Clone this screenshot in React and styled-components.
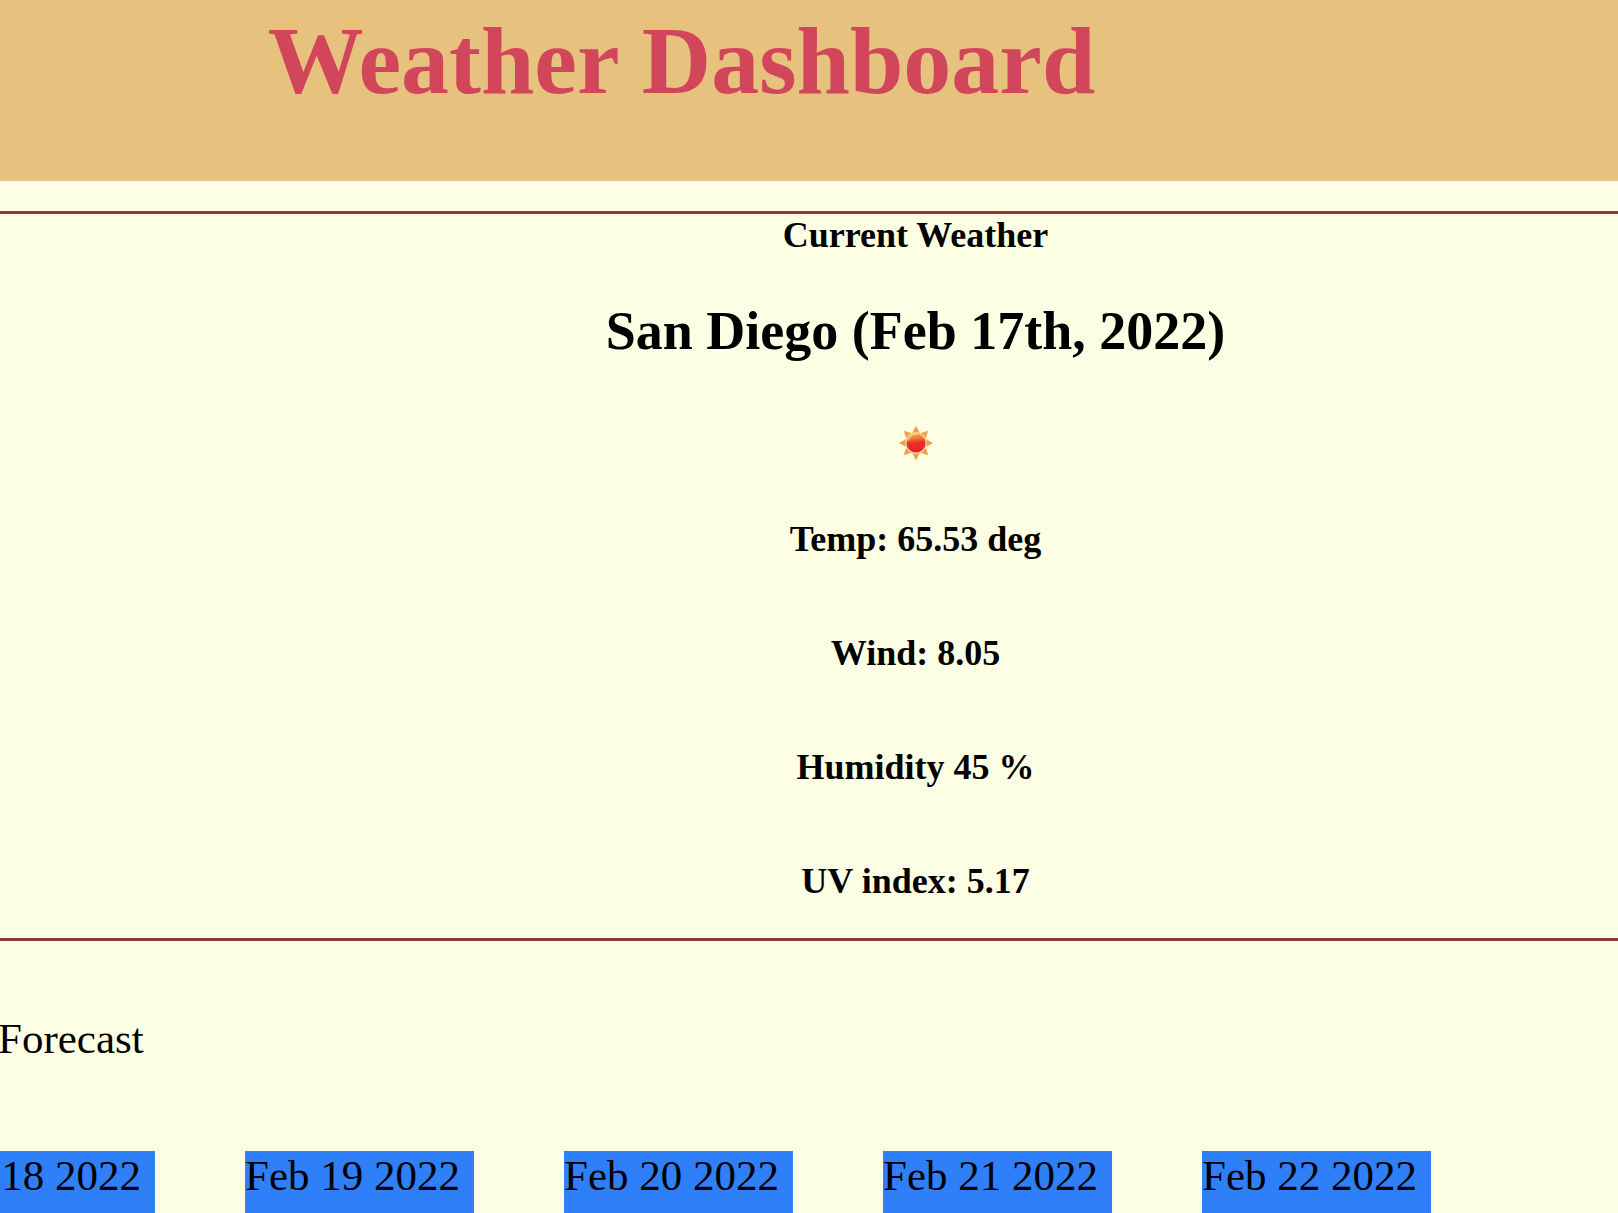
import React from "react";
import styled, { createGlobalStyle } from "styled-components";

const GlobalStyle = createGlobalStyle`
  *, *::before, *::after { box-sizing: border-box; }
  body {
    margin: 0;
    overflow-x: hidden;
    background: #fcffe4;
    color: #000;
    font-family: "Liberation Serif", "Times New Roman", Times, serif;
  }
`;

const Page = styled.div`
  display: flex;
  flex-direction: column;
  min-height: 100vh;
  overflow-x: hidden;
`;

const Header = styled.header`
  padding: 6px 255px 65px 0;
  background: #e7c27e;
  text-align: center;
`;

const Title = styled.h1`
  margin: 0;
  color: #d1465b;
  font-size: 96px;
  line-height: 110px;
`;

const Current = styled.section`
  display: flex;
  flex-direction: column;
  align-items: center;
  margin-top: 30px;
  padding: 0 0 36px 213px;
  border-top: 3px solid #933634;
  border-bottom: 3px solid #933634;
  font-weight: bold;
`;

const Label = styled.h3`
  margin: 0 0 44px;
  font-size: 36px;
  line-height: 42px;
`;

const City = styled.h2`
  margin: 0;
  font-size: 54px;
  line-height: 62px;
`;

const SunIcon = styled.svg`
  display: block;
  width: 36px;
  height: 36px;
  margin: 63px 0 57px;
`;

const Stats = styled.div`
  display: flex;
  flex-direction: column;
  gap: 72px;
  text-align: center;
`;

const Stat = styled.p`
  margin: 0;
  font-size: 36px;
  line-height: 42px;
`;

const Forecast = styled.section`
  display: flex;
  flex: 1;
  flex-direction: column;
  padding-top: 73px;
  font-size: 43px;
  line-height: 50px;
`;

const ForecastTitle = styled.p`
  margin: 0 0 87px -2px;
`;

const Days = styled.div`
  display: flex;
  flex: 1;
  gap: 90px;
  margin-left: -74px;
`;

const Day = styled.article`
  flex: 0 0 229px;
  background: #2f7ff8;
`;

const stats = ["Temp: 65.53 deg", "Wind: 8.05", "Humidity 45 %", "UV index: 5.17"];
const days = ["Feb 18 2022", "Feb 19 2022", "Feb 20 2022", "Feb 21 2022", "Feb 22 2022"];
const rays = [0, 45, 90, 135, 180, 225, 270, 315];

function Sun() {
  return (
    <SunIcon viewBox="0 0 36 36" role="img" aria-label="Sunny">
      <defs>
        <linearGradient id="disc" x1="0.4" y1="0" x2="0.5" y2="1">
          <stop offset="0" stopColor="#f3a53c" />
          <stop offset="0.25" stopColor="#ee8035" />
          <stop offset="0.48" stopColor="#e9332a" />
          <stop offset="1" stopColor="#eb1f25" />
        </linearGradient>
      </defs>
      {rays.map((angle) => (
        <path
          key={angle}
          d="M18 0.8 L21.8 8 Q18 6.8 14.2 8 Z"
          fill="#ee9d49"
          stroke="#f6c98a"
          strokeWidth="0.5"
          transform={`rotate(${angle} 18 18)`}
        />
      ))}
      <circle cx="18" cy="18" r="10.4" fill="#f7d3b0" />
      <circle cx="18" cy="18" r="9.6" fill="url(#disc)" />
      <path d="M10 15.6 A8.6 8.6 0 0 1 20 9.6" fill="none" stroke="#f8cf65" strokeWidth="1.2" />
    </SunIcon>
  );
}

export default function App() {
  return (
    <Page>
      <GlobalStyle />
      <Header>
        <Title>Weather Dashboard</Title>
      </Header>
      <Current>
        <Label>Current Weather</Label>
        <City>San Diego (Feb 17th, 2022)</City>
        <Sun />
        <Stats>
          {stats.map((stat) => (
            <Stat key={stat}>{stat}</Stat>
          ))}
        </Stats>
      </Current>
      <Forecast>
        <ForecastTitle>Forecast</ForecastTitle>
        <Days>
          {days.map((day) => (
            <Day key={day}>{day}</Day>
          ))}
        </Days>
      </Forecast>
    </Page>
  );
}
